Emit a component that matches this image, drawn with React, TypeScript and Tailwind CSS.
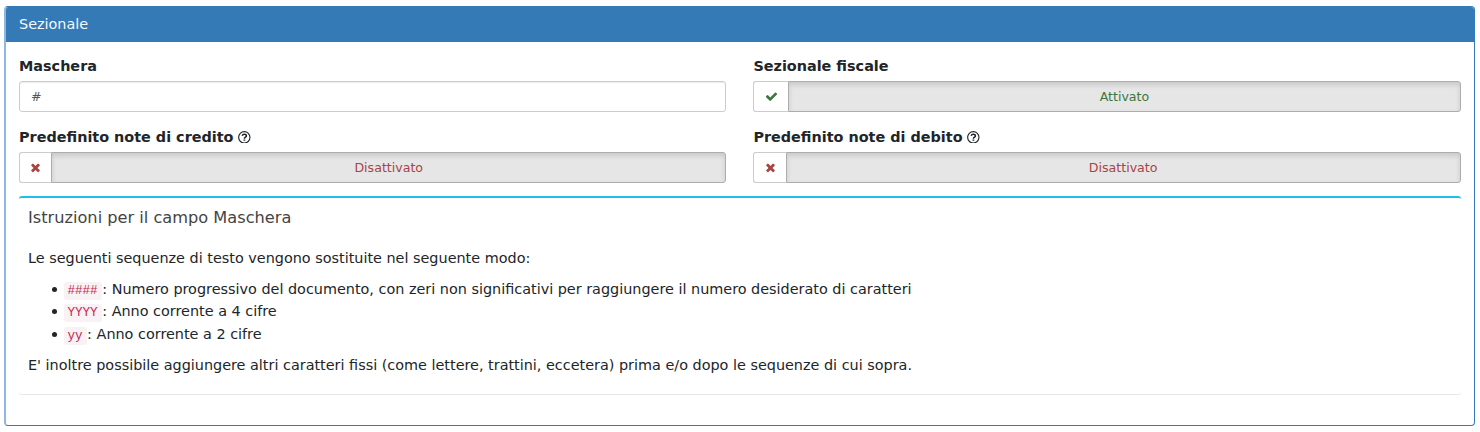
import type { ReactNode } from "react";

function CheckIcon() {
  return (
    <svg viewBox="0 0 1792 1792" className="size-[13px] shrink-0" fill="currentColor">
      <path d="M1671 566q0 40-28 68l-724 724-136 136q-28 28-68 28t-68-28l-136-136-362-362q-28-28-28-68t28-68l136-136q28-28 68-28t68 28l294 295 656-657q28-28 68-28t68 28l136 136q28 28 28 68z" />
    </svg>
  );
}

function TimesIcon() {
  return (
    <svg viewBox="0 0 1792 1792" className="size-[13px] shrink-0" fill="currentColor">
      <path d="M1490 1322q0 40-28 68l-136 136q-28 28-68 28t-68-28l-294-294-294 294q-28 28-68 28t-68-28l-136-136q-28-28-28-68t28-68l294-294-294-294q-28-28-28-68t28-68l136-136q28-28 68-28t68 28l294 294 294-294q28-28 68-28t68 28l136 136q28 28 28 68t-28 68l-294 294 294 294q28 28 28 68z" />
    </svg>
  );
}

function HelpIcon() {
  return (
    <svg viewBox="0 0 12 12" className="size-[12.6px] shrink-0" fill="none" stroke="currentColor">
      <circle cx="6" cy="6" r="5.4" strokeWidth="1.1" />
      <path d="M3.9 4.6C4.3 3.600 5.1 3.1 6 3.1c1.2 0 2 .7 2 1.600C8 5.900 6.100 5.900 6.100 7.300" strokeWidth="1.5" />
      <path d="M5.300 8.700h1.600" strokeWidth="1.400" />
    </svg>
  );
}

function Field({ label, help, children }: { label: string; help?: boolean; children: ReactNode }) {
  return (
    <div className="flex h-[71px] flex-col">
      <div className="flex h-[24px] items-center gap-[4.700px] text-[14.4px] font-bold leading-[22px]">
        {label}
        {help && <HelpIcon />}
      </div>
      {children}
    </div>
  );
}

function Toggle({ on }: { on: boolean }) {
  return (
    <div className={`mt-[3px] flex h-[31px] text-[12.6px] ${on ? "text-[#3c763d]" : "text-[#a94442]"}`}>
      <div
        className={`flex items-center justify-center rounded-l-[3px] border border-r-0 border-[#ccc] bg-white ${on ? "w-[35px]" : "w-[32.4px]"}`}
      >
        {on ? <CheckIcon /> : <TimesIcon />}
      </div>
      <div className="flex flex-1 items-center justify-center rounded-r-[3px] border border-[#adadad] bg-[#e6e6e6] pt-[2px] shadow-[inset_0_3px_5px_rgba(0,0,0,0.125)]">
        {on ? "Attivato" : "Disattivato"}
      </div>
    </div>
  );
}

function Code({ children }: { children: string }) {
  return (
    <code className="rounded-[3px] bg-[#f9f2f4] pb-[1.800px] pl-[3.400px] pr-[4.600px] pt-[1.800px] font-['Liberation_Mono',monospace] text-[12.6px] text-[#c7254e]">
      {children}
    </code>
  );
}

function Item({ code, children }: { code: string; children: ReactNode }) {
  return (
    <li className="h-[22px] before:mb-[2px] before:ml-[-12px] before:mr-[7px] before:inline-block before:size-[5px] before:rounded-full before:bg-[#212529] before:content-['']">
      <Code>{code}</Code>
      {children}
    </li>
  );
}

export default function App() {
  return (
    <div className="h-[432px] bg-white pl-[4px] pr-[5px] pt-[6px] font-['DejaVu_Sans',sans-serif] text-[14.4px] text-[#212529]">
      <div className="h-[420px] overflow-hidden rounded-[4px] border border-l-2 border-[#337ab7] border-l-[#90b8df] bg-white">
        <div className="h-[35px] bg-[#337ab7] pl-[13px] leading-[34px] text-[#f5f9fc]">Sezionale</div>
        <div className="pl-[13px] pr-[13.500px] pt-[12px]">
          <div className="grid grid-cols-2 gap-x-[27.300px]">
            <Field label="Maschera">
              <div className="mt-[3px] flex h-[31px] items-center rounded-[3px] border border-[#ccc] pl-[11px] pt-[2px] text-[12.6px] text-[#555] shadow-[inset_0_1px_1px_rgba(0,0,0,0.075)]">
                #
              </div>
            </Field>
            <Field label="Sezionale fiscale">
              <Toggle on />
            </Field>
            <Field label="Predefinito note di credito" help>
              <Toggle on={false} />
            </Field>
            <Field label="Predefinito note di debito" help>
              <Toggle on={false} />
            </Field>
          </div>
          <div className="h-[198px] rounded-[3px] border-t-2 border-[#1fbfe6] bg-white px-[9px] shadow-[0_1px_1px_rgba(0,0,0,0.1)]">
            <h3 className="pt-[10px] text-[16.200px] leading-[20px] text-[#444]">Istruzioni per il campo Maschera</h3>
            <p className="pt-[19px] leading-[22px]">Le seguenti sequenze di testo vengono sostituite nel seguente modo:</p>
            <ul className="pt-[9px] pl-[36px] leading-[22px] [&>li:last-child]:mt-px">
              <Item code="####">
                : Numero progressivo del documento, con zeri non significativi per raggiungere il numero desiderato di
                caratteri
              </Item>
              <Item code="YYYY">: Anno corrente a 4 cifre</Item>
              <Item code="yy">: Anno corrente a 2 cifre</Item>
            </ul>
            <p className="pt-[9px] leading-[22px]">
              E' inoltre possibile aggiungere altri caratteri fissi (come lettere, trattini, eccetera) prima e/o dopo le
              sequenze di cui sopra.
            </p>
          </div>
        </div>
      </div>
    </div>
  );
}
